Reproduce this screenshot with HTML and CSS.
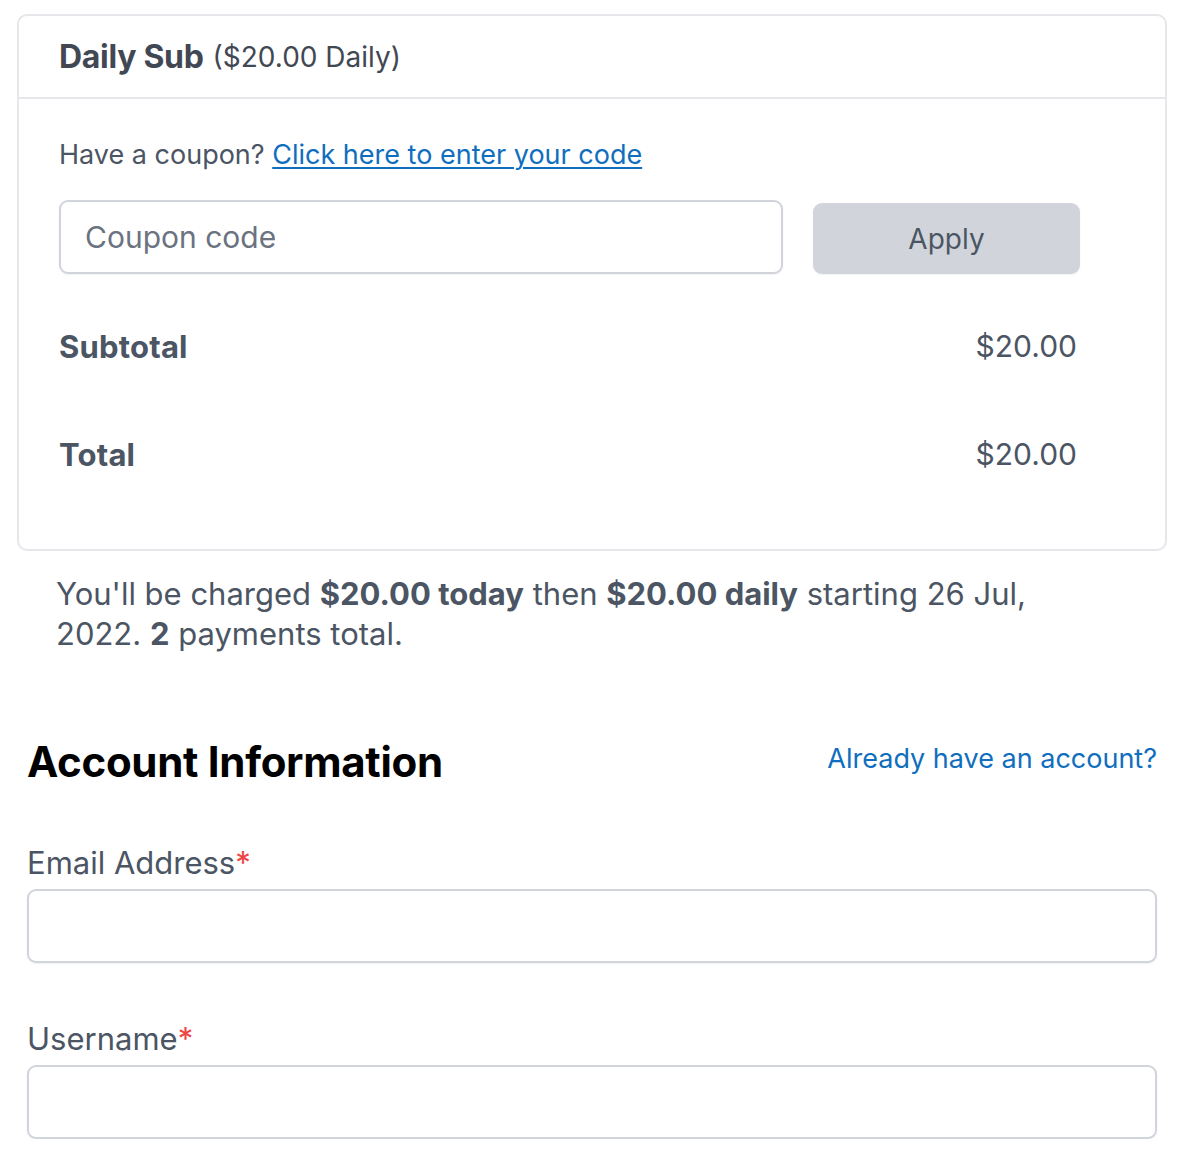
FILE: index.html
```html
<!DOCTYPE html>
<html>
<head>
<meta charset="utf-8">
<link rel="stylesheet" href="styles.css">
</head>
<body>
<div class="page">
  <div class="card">
    <div class="card-head">
      <span class="plan">Daily Sub</span> <span class="plan-price">($20.00 Daily)</span>
    </div>
    <div class="card-body">
      <p class="coupon-q">Have a coupon? <a href="#" class="link-u">Click here to enter your code</a></p>
      <div class="coupon-row">
        <input class="coupon-input" type="text" placeholder="Coupon code">
        <button class="apply">Apply</button>
      </div>
      <div class="sum-row">
        <span class="sum-label">Subtotal</span>
        <span class="sum-val">$20.00</span>
      </div>
      <div class="sum-row">
        <span class="sum-label">Total</span>
        <span class="sum-val">$20.00</span>
      </div>
    </div>
  </div>
  <p class="charge">You'll be charged <b>$20.00 today</b> then <b>$20.00 daily</b> starting 26 Jul, 2022. <b>2</b> payments total.</p>

  <div class="account">
    <div class="acc-head">
      <h2 class="acc-title">Account Information</h2>
      <a href="#" class="acc-link">Already have an account?</a>
    </div>
    <div class="field">
      <label class="field-label">Email Address<span class="req">*</span></label>
      <input class="field-input" type="text">
    </div>
    <div class="field">
      <label class="field-label">Username<span class="req">*</span></label>
      <input class="field-input" type="text">
    </div>
  </div>
</div>
</body>
</html>
```
FILE: styles.css
```css
* { box-sizing: border-box; }
html, body { margin: 0; padding: 0; background: #fff; }
body {
  font-family: Inter, "Noto Sans", "Liberation Sans", sans-serif;
  color: #4b5563;
}
.page {
  width: 1150px;
  margin-left: 17px;
  padding-top: 14px;
}
.card {
  border: 2px solid #e5e7eb;
  border-radius: 10px;
}
.card-head {
  height: 83px;
  padding-left: 40px;
  display: flex;
  align-items: center;
  gap: 9px;
  border-bottom: 2px solid #e5e7eb;
  color: #424853;
}
.plan { font-size: 32px; font-weight: 700; letter-spacing: -0.3px; }
.plan-price { font-size: 28px; }
.card-body {
  padding: 36px 85px 41px 40px;
}
.coupon-q {
  margin: 0;
  font-size: 27px;
  line-height: 40px;
}
.link-u { color: #106ebe; text-decoration: underline; text-underline-offset: 3px; text-decoration-thickness: 2px; }
.coupon-row {
  margin-top: 25px;
  display: flex;
  align-items: flex-end;
  gap: 30px;
  margin-bottom: 18px;
}
.coupon-input {
  width: 724px;
  height: 74px;
  border: 2px solid #d1d5db;
  border-radius: 9px;
  padding: 0 24px;
  font-family: inherit;
  font-size: 30px;
  color: #4b5563;
  outline: none;
  box-shadow: 0 1px 2px rgba(0, 0, 0, 0.06);
}
.coupon-input::placeholder { color: #6b7280; }
.apply {
  width: 267px;
  height: 71px;
  border: none;
  border-radius: 9px;
  background: #d1d5db;
  font-family: inherit;
  font-size: 28px;
  color: #4b5563;
  box-shadow: 0 1px 2px rgba(0, 0, 0, 0.06);
}
.sum-row {
  height: 108px;
  display: flex;
  align-items: center;
  justify-content: space-between;
  font-size: 30px;
}
.sum-label { font-weight: 700; font-size: 31px; letter-spacing: 0.2px; }
.sum-val { padding-right: 3px; }
.charge {
  margin: 23px 0 0 0;
  padding: 0 100px 0 39px;
  font-size: 31px;
  line-height: 40px;
}
.charge b { font-weight: 700; }
.account {
  padding: 0 10px;
  margin-top: 82px;
}
.acc-head {
  display: flex;
  justify-content: space-between;
  align-items: center;
  height: 50px;
}
.acc-title {
  margin: 0;
  font-size: 42px;
  font-weight: 700;
  color: #000;
  letter-spacing: -0.3px;
}
.acc-link {
  font-size: 27px;
  color: #106ebe;
  text-decoration: none;
  margin-top: -6px;
}
.field { display: flex; flex-direction: column; }
.acc-head + .field { margin-top: 57px; }
.field + .field { margin-top: 56px; }
.field-label {
  font-size: 31px;
  line-height: 40px;
  margin-bottom: 6px;
}
.req { color: #ef4444; }
.field-input {
  height: 74px;
  border: 2px solid #d1d5db;
  border-radius: 9px;
  outline: none;
  font-family: inherit;
  font-size: 30px;
  box-shadow: 0 1px 2px rgba(0, 0, 0, 0.06);
}
```
